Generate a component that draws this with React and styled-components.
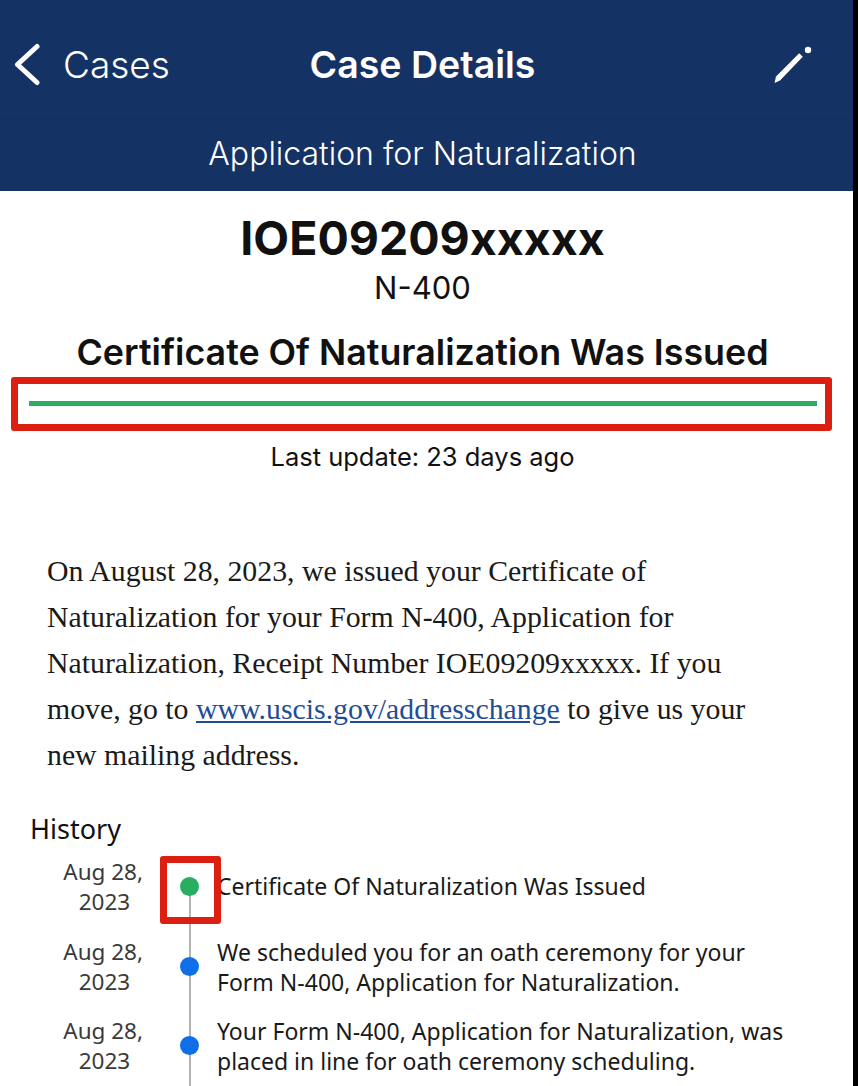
import styled, { createGlobalStyle } from "styled-components";

const GlobalStyle = createGlobalStyle`
  html, body {
    margin: 0;
    padding: 0;
    background: #000;
  }
  * {
    box-sizing: border-box;
  }
`;

const Phone = styled.div`
  width: 858px;
  height: 1086px;
  overflow: hidden;
  background: #000;
  display: flex;
`;

const Screen = styled.div`
  width: 853px;
  height: 1086px;
  background: #fff;
  color: #111;
  font-family: Inter, "Liberation Sans", sans-serif;
`;

const NavBar = styled.div`
  height: 191px;
  background: #153265;
  color: #fff;
  display: flex;
  flex-direction: column;
`;

const NavTop = styled.div`
  height: 114px;
  padding: 16px 40px 0 14px;
  display: flex;
  align-items: center;
  justify-content: space-between;
  border-bottom: 1px solid #18356a;
`;

const BackLink = styled.div`
  display: flex;
  align-items: center;
  gap: 23px;
  width: 268px;
  font-size: 37px;
  font-weight: 300;
`;

const NavTitle = styled.div`
  font-size: 37.5px;
  font-weight: 600;
`;

const NavAction = styled.div`
  width: 250px;
  display: flex;
  justify-content: flex-end;
`;

const NavSub = styled.div`
  width: 845px;
  text-align: center;
  font-size: 32px;
  font-weight: 300;
  padding-top: 20px;
`;

const Summary = styled.div`
  width: 845px;
  display: flex;
  flex-direction: column;
  align-items: center;
`;

const ReceiptNumber = styled.div`
  margin-top: 17px;
  font-size: 46.5px;
  font-weight: 700;
  line-height: 60px;
`;

const FormCode = styled.div`
  font-size: 31px;
  line-height: 39px;
`;

const StatusTitle = styled.div`
  margin-top: 23px;
  font-size: 35.8px;
  font-weight: 600;
  line-height: 44px;
`;

const ProgressFrame = styled.div`
  width: 821px;
  height: 54px;
  margin: 3px 0 0 11px;
  align-self: flex-start;
  border: 7px solid #dc1f10;
  border-radius: 3px;
  padding: 0 8px 2px 11px;
  display: flex;
  align-items: center;
`;

const ProgressBar = styled.div`
  width: 100%;
  height: 5px;
  background: #27ae60;
`;

const LastUpdate = styled.div`
  margin-top: 10px;
  font-size: 25.5px;
  line-height: 32px;
`;

const Message = styled.p`
  width: 710px;
  margin: 75px 0 0 47px;
  font-family: "Liberation Serif", serif;
  font-size: 29.8px;
  line-height: 46px;
  color: #1a1a1a;

  a {
    color: #1f4e96;
    text-decoration: underline;
  }
`;

const History = styled.div`
  position: relative;
  margin-top: 31px;
  padding-left: 30px;
  font-family: "Noto Sans", sans-serif;
`;

const HistoryTitle = styled.div`
  font-size: 27px;
  line-height: 40px;
  height: 48px;
`;

const Row = styled.div`
  height: 79.5px;
  display: grid;
  grid-template-columns: 113px 75px 1fr;
`;

const RowDate = styled.div`
  font-size: 22.5px;
  line-height: 30px;
  text-align: right;
  color: #3a3a3a;

  span {
    display: block;
    text-align: center;
    padding-left: 36px;
  }
`;

const Track = styled.div`
  position: relative;
  padding: 20px 0 0 37px;

  &::before {
    content: "";
    position: absolute;
    left: 46px;
    top: ${(p) => p.$lineTop}px;
    bottom: 0;
    width: 2px;
    background: #b4b4b4;
  }
`;

const Dot = styled.div`
  position: relative;
  width: 19px;
  height: 19px;
  border-radius: 50%;
  background: ${(p) => (p.$done ? "#27ae60" : "#0f6fe6")};
`;

const RowText = styled.div`
  font-size: 23px;
  line-height: 30px;
  color: #1a1a1a;
  padding-top: ${(p) => p.$top}px;
  margin-left: -1px;
  white-space: nowrap;
`;

const DotHighlight = styled.div`
  position: absolute;
  left: 160px;
  top: 47px;
  width: 61px;
  height: 68px;
  border: 7px solid #dc1f10;
  border-radius: 3px;
`;

const rows = [
  {
    done: true,
    top: 14,
    lines: ["Certificate Of Naturalization Was Issued"],
  },
  {
    top: 0,
    lines: [
      "We scheduled you for an oath ceremony for your",
      "Form N-400, Application for Naturalization.",
    ],
  },
  {
    top: 0,
    lines: [
      "Your Form N-400, Application for Naturalization, was",
      "placed in line for oath ceremony scheduling.",
    ],
  },
];

export default function App() {
  return (
    <Phone>
      <GlobalStyle />
      <Screen>
        <NavBar>
          <NavTop>
            <BackLink>
              <svg width="26" height="44" viewBox="0 0 26 44" fill="none">
                <path
                  d="M23 3.5 L3.5 21.5 L23 39.5"
                  stroke="#fff"
                  strokeWidth="5"
                  strokeLinecap="round"
                  strokeLinejoin="round"
                />
              </svg>
              Cases
            </BackLink>
            <NavTitle>Case Details</NavTitle>
            <NavAction>
              <svg width="40" height="40" viewBox="0 0 40 40" fill="#fff">
                <path d="M1.5 38 L3 31.5 L26.2 8.3 L29.8 11.7 L7 35.5 Z" />
                <circle cx="35" cy="5" r="3.2" />
              </svg>
            </NavAction>
          </NavTop>
          <NavSub>Application for Naturalization</NavSub>
        </NavBar>

        <Summary>
          <ReceiptNumber>IOE09209xxxxx</ReceiptNumber>
          <FormCode>N-400</FormCode>
          <StatusTitle>Certificate Of Naturalization Was Issued</StatusTitle>
          <ProgressFrame>
            <ProgressBar />
          </ProgressFrame>
          <LastUpdate>Last update: 23 days ago</LastUpdate>
        </Summary>

        <Message>
          On August 28, 2023, we issued your Certificate of Naturalization for
          your Form N-400, Application for Naturalization, Receipt Number
          IOE09209xxxxx. If you move, go to{" "}
          <a href="#addresschange">www.uscis.gov/addresschange</a> to give us
          your new mailing address.
        </Message>

        <History>
          <HistoryTitle>History</HistoryTitle>
          {rows.map((row, i) => (
            <Row key={i}>
              <RowDate>
                Aug 28,
                <span>2023</span>
              </RowDate>
              <Track $lineTop={row.done ? 30 : 0}>
                <Dot $done={row.done} />
              </Track>
              <RowText $top={row.top}>
                {row.lines.map((line) => (
                  <div key={line}>{line}</div>
                ))}
              </RowText>
            </Row>
          ))}
          <DotHighlight />
        </History>
      </Screen>
    </Phone>
  );
}
